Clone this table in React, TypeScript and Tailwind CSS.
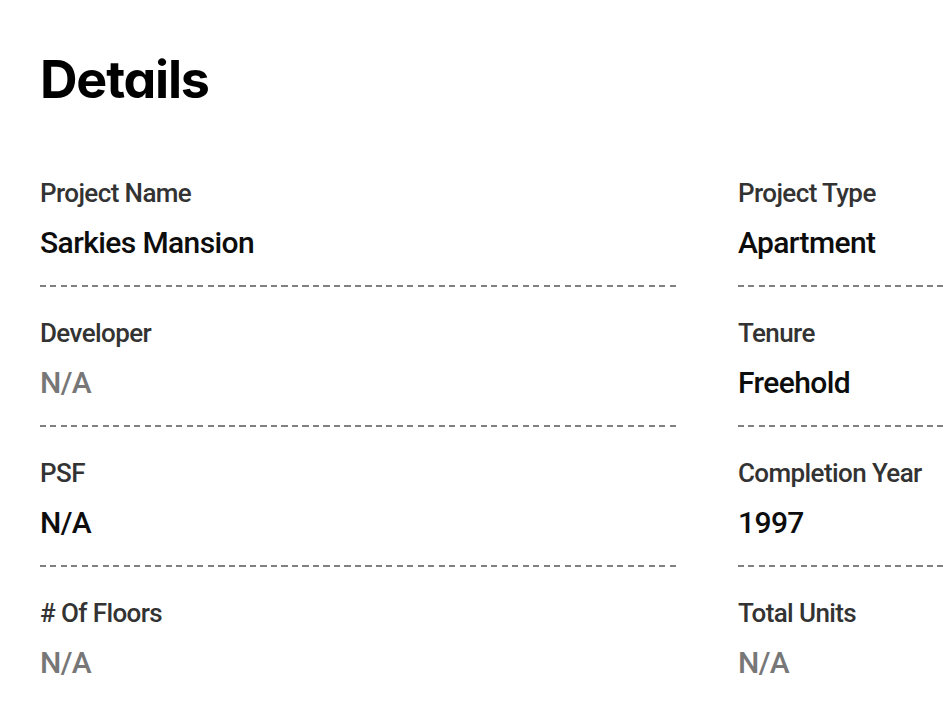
import React from "react";

const rows: { label: string; value: string; muted?: boolean }[][] = [
  [
    { label: "Project Name", value: "Sarkies Mansion" },
    { label: "Project Type", value: "Apartment" },
  ],
  [
    { label: "Developer", value: "N/A", muted: true },
    { label: "Tenure", value: "Freehold" },
  ],
  [
    { label: "PSF", value: "N/A" },
    { label: "Completion Year", value: "1997" },
  ],
  [
    { label: "# Of Floors", value: "N/A", muted: true },
    { label: "Total Units", value: "N/A", muted: true },
  ],
];

function Item({ label, value, muted, last }: { label: string; value: string; muted?: boolean; last?: boolean }) {
  return (
    <div className="flex flex-col">
      <div className="text-[26px] leading-[30px] font-medium text-[#333] tracking-[-0.6px] h-[30px]">{label}</div>
      <div
        className={`mt-[17px] text-[30px] leading-[36px] font-medium tracking-[-0.6px] ${muted ? "text-[#777]" : "text-[#0d0d0d]"}`}
      >
        {value}
      </div>
      {!last && (
        <div className="mt-[24px] h-[2px] w-full bg-[repeating-linear-gradient(90deg,#808080_0px,#808080_6px,transparent_6px,transparent_10.5px)]" />
      )}
    </div>
  );
}

export default function App() {
  return (
    <div className="w-[943px] h-[717px] overflow-hidden bg-white" style={{ fontFamily: "Roboto, sans-serif" }}>
      <div className="pl-[40px] pt-[50px] w-[1400px]">
        <h1
          className="text-[52px] leading-[60px] font-bold text-black tracking-[-1.2px]"
          style={{ fontFamily: "Inter, sans-serif", fontFeatureSettings: '"cv11"' }}
        >
          Details
        </h1>
        <div className="mt-[68px] grid grid-cols-[638px_638px] gap-x-[60px]">
          {rows.map((r, i) => (
            <React.Fragment key={i}>
              {r.map((it, j) => (
                <div key={j} className={i > 0 ? "mt-[31px]" : ""}>
                  <Item {...it} last={i === rows.length - 1} />
                </div>
              ))}
            </React.Fragment>
          ))}
        </div>
      </div>
    </div>
  );
}
